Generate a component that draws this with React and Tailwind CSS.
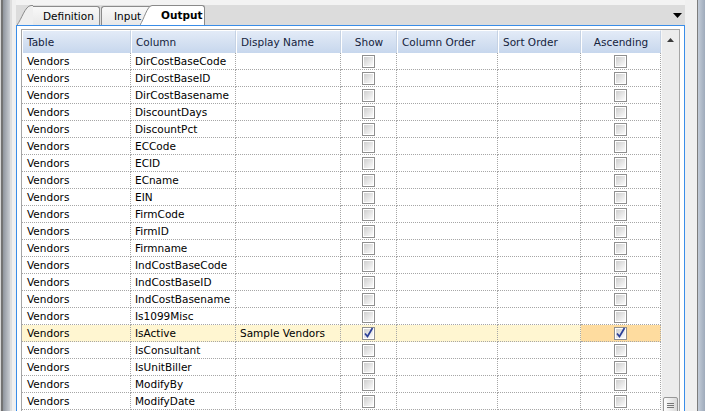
import React from 'react'

const rows = [
  'DirCostBaseCode', 'DirCostBaseID', 'DirCostBasename', 'DiscountDays', 'DiscountPct',
  'ECCode', 'ECID', 'ECname', 'EIN', 'FirmCode', 'FirmID', 'Firmname',
  'IndCostBaseCode', 'IndCostBaseID', 'IndCostBasename', 'Is1099Misc', 'IsActive',
  'IsConsultant', 'IsUnitBiller', 'ModifyBy', 'ModifyDate',
]

const Check = ({checked}) => (
  <div className="w-[13px] h-[13px] border border-[#8f8f8f] p-[1px] bg-white">
    <div className="relative w-full h-full bg-linear-to-br from-[#cfcfcf] to-[#fbfbfb]">
      {checked && (
        <svg className="absolute -left-[1px] -top-[2px]" width="11" height="12" viewBox="0 0 11 12">
          <path d="M2 6.5 L4.5 9.5 L9.5 1" fill="none" stroke="#2b3f97" strokeWidth="1.7" />
        </svg>
      )}
    </div>
  </div>
)

const Slant = ({fill, w}) => (
  <svg width={w} height="20" viewBox={`0 0 ${w} 20`} className="block">
    <path d={`M0 20 C${w * 0.3} 14 ${w * 0.5} 1 ${w - 2} 0.5 L${w} 0.5 L${w} 20 Z`} fill={fill} />
    <path d={`M0 20 C${w * 0.3} 14 ${w * 0.5} 1 ${w - 2} 0.5 L${w} 0.5`} fill="none" stroke="#8a8a8a" />
  </svg>
)

const App = () => {
  const cell = 'border-r border-b border-dotted border-[#a6a6a6] h-full'
  const head = 'h-full border-t border-l border-r border-white border-r-[#c5d2e4] bg-linear-to-b from-[#e3ebf7] to-[#c7d7ed] flex items-center pt-[2px]'

  return (
    <div className="flex h-[411px] w-[705px] overflow-hidden bg-[#f0f0f0] font-['DejaVu_Sans',sans-serif] text-[10.5px] text-black">
      {/* window edge left */}
      <div className="flex w-[16px] shrink-0">
        <div className="w-[1px] bg-[#d8d8d8]" />
        <div className="w-[2px] bg-[#737373]" />
        <div className="w-[7px] bg-linear-to-r from-[#8f959e] to-[#c9cdd3]" />
        <div className="w-[2px] bg-[#dedede]" />
        <div className="w-[4px] bg-[#f0f0f0]" />
      </div>

      <div className="flex flex-col w-[669px] shrink-0 min-h-0">
        <div className="h-[5px] shrink-0 bg-[#f3f3f3]" />
        {/* tab strip */}
        <div className="h-[20px] shrink-0 bg-[#dcdcdc] flex items-end pl-[1px]">
          <div className="flex items-end h-[19px]">
            <Slant fill="#efefef" w={16} />
            <div className="h-[19px] w-[67px] border-t border-r border-[#8a8a8a] rounded-tr-[3px] bg-linear-to-b from-[#f8f8f8] to-[#e8e8e8] pl-[10px] leading-[18px]">
              Definition
            </div>
          </div>
          <div className="ml-[1px] h-[19px] w-[52px] border-t border-l border-[#8a8a8a] rounded-tl-[3px] bg-linear-to-b from-[#f8f8f8] to-[#e8e8e8] pl-[12px] leading-[18px]">
            Input
          </div>
          <div className="relative z-10 -ml-[13px] flex items-end h-[20px]">
            <Slant fill="#ffffff" w={14} />
            <div className="h-[20px] w-[51px] border-t border-r border-[#8a8a8a] rounded-tr-[3px] bg-white pl-[7px] leading-[19px] font-bold">
              Output
            </div>
          </div>
          <div className="flex-1" />
          <svg className="mb-[7px] mr-[3px]" width="9" height="5" viewBox="0 0 9 5">
            <path d="M0 0 L9 0 L4.5 5 Z" fill="#000" />
          </svg>
        </div>

        {/* panel */}
        <div className="shrink-0 border-t border-l border-r border-[#3a8de8] bg-white pt-[3px] px-[4px]">
          <div className="flex border border-[#a5a5a5] bg-white">
            <div className="w-[639px] flex flex-col">
              <div className="flex h-[23px] text-[#15233d]">
                <div className={`${head} w-[109px] pl-[4px]`}>Table</div>
                <div className={`${head} w-[105px] pl-[4px]`}>Column</div>
                <div className={`${head} w-[105px] pl-[4px]`}>Display Name</div>
                <div className={`${head} w-[56px] justify-center`}>Show</div>
                <div className={`${head} w-[101px] pl-[4px]`}>Column Order</div>
                <div className={`${head} w-[83px] pl-[4px]`}>Sort Order</div>
                <div className={`${head} w-[80px] justify-center`}>Ascending</div>
              </div>
              {rows.map((r) => {
                const active = r === 'IsActive'
                return (
                  <div key={r} className={`flex h-[17px] leading-[16px] ${active ? 'bg-[#fff6d1]' : ''}`}>
                    <div className={`${cell} w-[109px] pl-[5px]`}>Vendors</div>
                    <div className={`${cell} w-[105px] pl-[4px]`}>{r}</div>
                    <div className={`${cell} w-[105px] pl-[4px]`}>{active ? 'Sample Vendors' : ''}</div>
                    <div className={`${cell} w-[56px] flex justify-center pt-[2px]`}>
                      <Check checked={active} />
                    </div>
                    <div className={`${cell} w-[101px]`} />
                    <div className={`${cell} w-[83px]`} />
                    <div className={`${cell} w-[80px] flex justify-center pt-[2px] ${active ? 'bg-[#fedc9f]' : ''}`}>
                      <Check checked={active} />
                    </div>
                  </div>
                )
              })}
            </div>
            {/* vertical scrollbar */}
            <div className="w-[18px] flex flex-col bg-[#ececec] border-l border-[#f7f7f7]">
              <div className="h-[17px] flex items-center justify-center pt-[2px]">
                <svg width="7" height="4" viewBox="0 0 7 4">
                  <path d="M0 4 L3.5 0 L7 4 Z" fill="#3b3b3b" />
                </svg>
              </div>
              <div className="h-[350px]" />
              <div className="mx-[1px] h-[24px] border border-[#979797] rounded-t-[2px] bg-linear-to-r from-[#fdfdfd] to-[#dadada] flex flex-col items-center pt-[5px] gap-[1px]">
                <div className="w-[7px] h-[1px] bg-[#777]" />
                <div className="w-[7px] h-[1px] bg-[#777]" />
                <div className="w-[7px] h-[1px] bg-[#777]" />
              </div>
            </div>
          </div>
        </div>
      </div>

      {/* window edge right */}
      <div className="flex w-[20px] shrink-0">
        <div className="w-[12px] bg-[#f0f0f0]" />
        <div className="w-[1px] bg-[#7d7d7d]" />
        <div className="w-[7px] bg-linear-to-r from-[#c3ccd8] to-[#9fabbb]" />
      </div>
    </div>
  )
}

export default App
